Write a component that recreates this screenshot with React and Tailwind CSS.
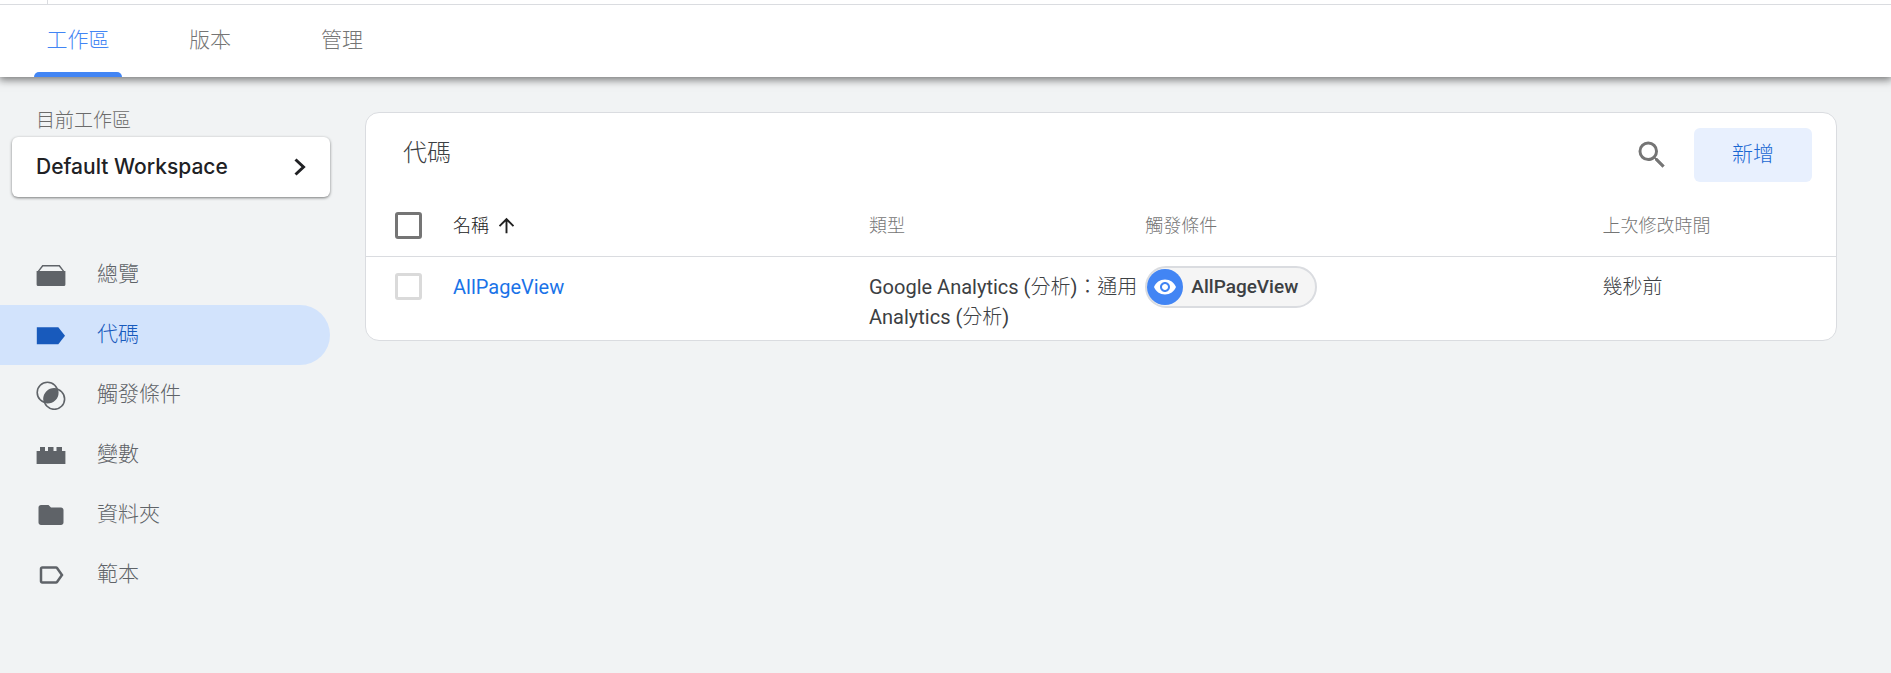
import React from "react";
import { MdSearch, MdArrowUpward, MdVisibility, MdFolder, MdLabelOutline } from "react-icons/md";

const OverviewIcon = () => (
  <svg viewBox="0 0 30 30" className="h-[30px] w-[30px]" fill="currentColor" aria-hidden="true">
    <path d="M6.3 5h17.4L28.6 11.500H27L22.900 6.500H7.100L3 11.500H1.400z" />
    <path d="M.6 11.100h28.800v13.400a1.500 1.500 0 0 1-1.500 1.500H2.100A1.500 1.500 0 0 1 .6 24.500z" />
  </svg>
);

const TagIcon = () => (
  <svg viewBox="0 0 30 30" className="h-[30px] w-[30px]" fill="currentColor" aria-hidden="true">
    <path d="M.8 7.200h21.500L29 15.700 22.300 24.200H.8z" />
  </svg>
);

const TriggerIcon = () => (
  <svg viewBox="0 0 30 30" className="h-[30px] w-[30px]" aria-hidden="true">
    <g fill="none" stroke="currentColor" strokeWidth="1.600">
      <circle cx="11.500" cy="12.500" r="10.300" />
      <circle cx="18.300" cy="19" r="10.300" />
    </g>
    <path
      fill="currentColor"
      d="M21.300 9.200A10.300 10.300 0 0 1 8.500 22.300 10.300 10.300 0 0 1 21.300 9.200z"
    />
  </svg>
);

const VariableIcon = () => (
  <svg viewBox="0 0 30 30" className="h-[30px] w-[30px]" fill="currentColor" aria-hidden="true">
    <path d="M.6 11H4V7h5v4h3V7h5.500v4h3V7h5.500v4h3.400v13H.6z" />
  </svg>
);

const FolderIcon = () => <MdFolder size={30} aria-hidden="true" />;
const TemplateIcon = () => <MdLabelOutline size={30} aria-hidden="true" />;

const TABS = ["工作區", "版本", "管理"];

const NAV = [
  { label: "總覽", Icon: OverviewIcon },
  { label: "代碼", Icon: TagIcon, active: true },
  { label: "觸發條件", Icon: TriggerIcon },
  { label: "變數", Icon: VariableIcon },
  { label: "資料夾", Icon: FolderIcon },
  { label: "範本", Icon: TemplateIcon },
];

function Header() {
  return (
    <header className="relative z-10 bg-white shadow-[0_2px_8px_1px_rgba(0,0,0,0.5)]">
      <div className="h-[5px] border-b border-[#dadce0] pl-[47px]">
        <div className="h-full w-px bg-[#dadce0]" />
      </div>
      <nav className="flex pl-3">
        {TABS.map((tab, i) => (
          <a
            key={tab}
            href="#"
            className={
              i === 0
                ? "flex h-[72px] w-[132px] flex-col items-center text-[21px] text-[#4285f4]"
                : "flex h-[72px] w-[132px] flex-col items-center text-[21px] text-[#757575]"
            }
          >
            <span className="flex flex-1 items-center pt-1">{tab}</span>
            <span className={i === 0 ? "h-[5px] w-[88px] rounded-t-[5px] bg-[#4285f4]" : "h-[5px]"} />
          </a>
        ))}
      </nav>
    </header>
  );
}

function Sidebar() {
  return (
    <aside className="w-[330px] shrink-0 pt-7">
      <div className="pb-px pl-9 text-[19px] leading-[31px] text-[#6b6b6b]">目前工作區</div>
      <button
        type="button"
        className="ml-3 flex h-[60px] w-[318px] items-center justify-between rounded-[6px] bg-white pr-6 pl-6 font-[Inter,sans-serif] text-[21px] font-medium text-[#202124] shadow-[0_1px_3px_rgba(0,0,0,0.5)]"
      >
        Default Workspace
        <svg viewBox="0 0 12 18" className="h-[18px] w-3" fill="none" stroke="currentColor" strokeWidth="3" aria-hidden="true">
          <path d="M1.500 1.500 9.500 9l-8 7.500" />
        </svg>
      </button>
      <nav className="mt-12 flex flex-col">
        {NAV.map(({ label, Icon, active }) => (
          <a
            key={label}
            href="#"
            className={
              active
                ? "flex h-[60px] items-center gap-[31px] rounded-r-full bg-[#d2e3fc] pl-9 text-[21px] text-[#185abc]"
                : "flex h-[60px] items-center gap-[31px] pl-9 text-[21px] text-[#5f6368]"
            }
          >
            <Icon />
            {label}
          </a>
        ))}
      </nav>
    </aside>
  );
}

function TagCard() {
  return (
    <section className="min-w-0 flex-1 overflow-hidden rounded-[14px] border border-[#dadce0] bg-white">
      <div className="flex h-[83px] items-start justify-between pt-[15px] pr-6 pl-[37px]">
        <h1 className="text-[24px] leading-[50px] text-[#3c4043]">代碼</h1>
        <div className="flex items-center gap-6">
          <button type="button" aria-label="搜尋" className="text-[#757575]">
            <MdSearch size={36} />
          </button>
          <button type="button" className="h-[54px] w-[118px] rounded-[6px] bg-[#e8f0fe] text-[21px] text-[#1967d2]">
            新增
          </button>
        </div>
      </div>
      <table className="w-full table-fixed text-left text-[20px] leading-[30px] text-[#3c4043]">
        <thead>
          <tr className="h-[60px] border-b border-[#dadce0] text-[18px] text-[#757575]">
            <th className="w-[87px] pl-[29px] font-light">
              <input
                type="checkbox"
                aria-label="全選"
                className="block h-[27px] w-[27px] appearance-none rounded-[3px] border-[3px] border-[#757575]"
              />
            </th>
            <th className="w-[28.3%] font-light text-[#212121]">
              <span className="flex items-center gap-[6px]">
                名稱
                <MdArrowUpward size={23} aria-hidden="true" />
              </span>
            </th>
            <th className="w-[18.8%] font-light">類型</th>
            <th className="w-[31.1%] font-light">觸發條件</th>
            <th className="font-light">上次修改時間</th>
          </tr>
        </thead>
        <tbody>
          <tr className="align-top">
            <td className="pt-4 pl-[29px]">
              <input
                type="checkbox"
                aria-label="選取 AllPageView"
                className="block h-[27px] w-[27px] appearance-none rounded-[3px] border-[3px] border-[#dadada]"
              />
            </td>
            <td className="pt-[15px] font-normal">
              <a href="#" className="text-[#1a73e8]">AllPageView</a>
            </td>
            <td className="pt-[15px] pb-2">
              <span className="font-normal">Google Analytics (</span>分析<span className="font-normal">)</span>：通用{" "}
              <span className="font-normal">Analytics (</span>分析<span className="font-normal">)</span>
            </td>
            <td className="pt-[9px]">
              <a
                href="#"
                className="inline-flex h-[42px] items-center gap-2 rounded-full border-2 border-[#dadce0] bg-[#f5f5f5] pr-[17px] text-[19px] font-medium"
              >
                <span className="flex h-9 w-9 items-center justify-center rounded-full bg-[#4285f4] text-white">
                  <MdVisibility size={24} aria-hidden="true" />
                </span>
                AllPageView
              </a>
            </td>
            <td className="pt-[15px]">幾秒前</td>
          </tr>
        </tbody>
      </table>
    </section>
  );
}

export default function App() {
  return (
    <div className="flex min-h-screen flex-col bg-[#f1f3f4] font-[Roboto,'Noto_Sans_CJK_TC',sans-serif] font-light">
      <Header />
      <div className="flex flex-1 items-start">
        <Sidebar />
        <main className="flex min-w-0 flex-1 pt-[35px] pr-[54px] pb-8 pl-[35px]">
          <TagCard />
        </main>
      </div>
    </div>
  );
}
